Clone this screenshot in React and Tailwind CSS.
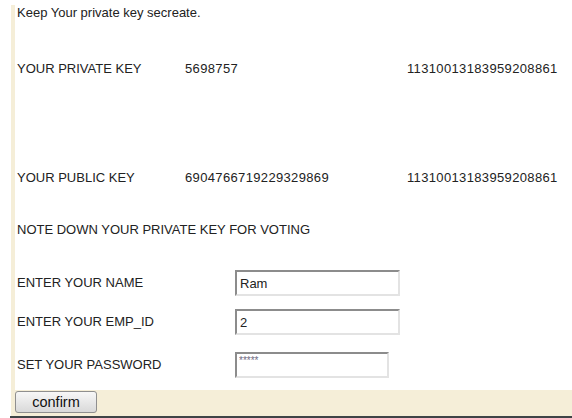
import React from 'react';

const FONT = { fontFamily: '"Liberation Sans", Arial, sans-serif' };

const keyRows = [
  { label: 'YOUR PRIVATE KEY', value: '5698757', modulus: '11310013183959208861', mt: 'mt-[38px]' },
  { label: 'YOUR PUBLIC KEY', value: '6904766719229329869', modulus: '11310013183959208861', mt: 'mt-[93px]' },
];

const formRows = [
  { label: 'ENTER YOUR NAME', value: 'Ram', width: 'w-[165px]', mt: 'mt-[32px]' },
  { label: 'ENTER YOUR EMP_ID', value: '2', width: 'w-[165px]', mt: 'mt-[13px]' },
  { label: 'SET YOUR PASSWORD', value: '*****', width: 'w-[154px]', mt: 'mt-[17px]', secret: true },
];

function Field({ value, width, secret }) {
  return (
    <input
      readOnly
      value={value}
      className={`${width} h-[26px] border-2 border-t-[#8c8c8c] border-l-[#8c8c8c] border-r-[#e3e3e3] border-b-[#e3e3e3] bg-white outline-none ${
        secret
          ? 'pl-[2px] pb-[9px] text-[10px] text-[#6e6a82]'
          : 'pl-[3px] text-[13px] text-[#222]'
      }`}
      style={FONT}
    />
  );
}

export default function App() {
  return (
    <div className="min-h-[418px] bg-white text-[13px] text-[#222]" style={FONT}>
      {/* left rule + rows */}
      <div className="ml-[11px] mt-[5px] border-l-4 border-[#f5eed8] pl-[2px]">
        <div className="flex h-[16px] items-center">Keep Your private key secreate.</div>

        {keyRows.map((r) => (
          <div key={r.label} className={`grid h-[16px] grid-cols-[168px_222px_1fr] items-center ${r.mt}`}>
            <span>{r.label}</span>
            <span className="tracking-[0.35px]">{r.value}</span>
            <span className="tracking-[0.35px]">{r.modulus}</span>
          </div>
        ))}

        <div className="mt-[38px] flex h-[16px] items-center">NOTE DOWN YOUR PRIVATE KEY FOR VOTING</div>

        {formRows.map((r) => (
          <div key={r.label} className={`grid h-[26px] grid-cols-[218px_1fr] items-center ${r.mt}`}>
            <span>{r.label}</span>
            <Field value={r.value} width={r.width} secret={r.secret} />
          </div>
        ))}

        <div className="h-[12px]" />
      </div>

      {/* button bar */}
      <div className="ml-[11px] flex h-[26px] items-start bg-[#f5eed8] pl-[4px] pt-[1px]">
        <button
          className="h-[22px] w-[82px] rounded-[3px] border border-[#8f8f8f] bg-gradient-to-b from-[#f7f7f7] to-[#d9d9d9] text-[14.5px] leading-none text-[#111]"
          style={FONT}
        >
          confirm
        </button>
      </div>
      <div className="ml-[10px] h-[2px] bg-[#3f4447]" />
    </div>
  );
}
